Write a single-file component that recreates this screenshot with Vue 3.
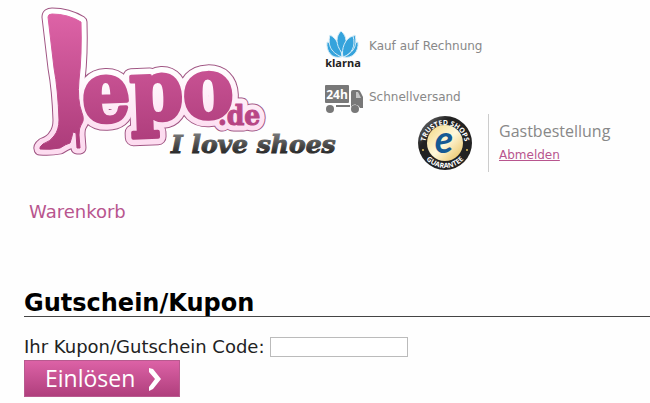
<script setup>
import { ref } from 'vue'

const code = ref('')
const petals = [
  'M341 57 C332 59 326 52 327 42 C332 43 337 48 341 57Z',
  'M344 57 C352 59 359 52 358 42 C353 43 348 48 344 57Z',
  'M342 57 C329 52 328 43 330 35 C336 38 341 46 342 57Z',
  'M343 57 C356 52 357 43 355 35 C349 38 344 46 343 57Z',
  'M342 53 C335 44 336 36 341 31 C347 36 348 44 342 53Z',
  'M343 57 C341 49 345 38 353 36 C356 46 352 54 343 57Z'
]
</script>

<template>
  <div class="page">
    <header class="header">
      <a class="logo" href="#" aria-label="Jepo.de">
        <svg viewBox="30 0 310 165" width="310" height="165">
          <defs>
            <linearGradient id="pink" gradientUnits="userSpaceOnUse" x1="0" y1="10" x2="0" y2="150">
              <stop offset="0" stop-color="#df64a8" />
              <stop offset="1" stop-color="#ac3c7a" />
            </linearGradient>
            <linearGradient id="halo" gradientUnits="userSpaceOnUse" x1="0" y1="70" x2="0" y2="135">
              <stop offset="0" stop-color="#ffffff" />
              <stop offset="1" stop-color="#fddcf0" />
            </linearGradient>
            <linearGradient id="steel" gradientUnits="userSpaceOnUse" x1="0" y1="134" x2="0" y2="154">
              <stop offset="0" stop-color="#777777" />
              <stop offset="1" stop-color="#262626" />
            </linearGradient>
            <path id="boot" d="M48 17 Q48 14 52 14 Q68 14 81 22 Q82 55 79 80 Q77 100 82 113 Q85 120 81 125 Q79 128 79 135 L80 148 L77 148 L76 133 L73 132 Q72 137 70 143 Q66 144 60 148 Q50 150 40 149 Q39 147 43 144 Q51 141 54 136 Q59 130 59 120 Q58 90 54 68Z" />
            <text id="word" class="word" x="83" y="122" transform="rotate(-2 83 122)">epo</text>
            <text id="tld" class="tld" x="218" y="125">.de</text>
          </defs>
          <g fill="#a05583" stroke="#a05583" stroke-linejoin="round">
            <use href="#boot" stroke-width="13" />
            <use href="#word" stroke-width="17" />
            <use href="#tld" stroke-width="13" />
          </g>
          <g fill="url(#halo)" stroke="url(#halo)" stroke-linejoin="round">
            <use href="#boot" stroke-width="11" />
            <use href="#word" stroke-width="15" />
            <use href="#tld" stroke-width="11" />
          </g>
          <g fill="url(#pink)" stroke="url(#pink)" stroke-linejoin="round">
            <use href="#boot" stroke-width="1" />
            <use href="#word" stroke-width="4" />
            <use href="#tld" stroke-width="1" />
          </g>
          <text class="claim" x="171" y="153" fill="url(#steel)" stroke="url(#steel)">I love shoes</text>
        </svg>
      </a>

      <div class="side">
        <div class="perk">
          <svg viewBox="324 28 40 42" width="40" height="42">
            <path v-for="petal in petals" :key="petal" class="petal" :d="petal" />
            <text class="klarna" x="343" y="67" text-anchor="middle">klarna</text>
          </svg>
          <span>Kauf auf Rechnung</span>
        </div>
        <div class="perk">
          <svg viewBox="324 84 40 30" width="40" height="30" fill="#787878">
            <rect x="325" y="85" width="24" height="18" rx="1" />
            <path d="M351 92 q0 -2 2 -2 h5 q2 0 3 3 l2 4 v11 h-3 a5 5 0 0 0 -9 -1z" />
            <path d="M356 92 h2 l3 6 h-5z" fill="#c4c4c4" />
            <rect x="336" y="105" width="14" height="2" />
            <circle cx="330" cy="109" r="4" />
            <circle cx="355" cy="109" r="4" />
            <text class="hours" x="337" y="99" text-anchor="middle">24h</text>
          </svg>
          <span>Schnellversand</span>
        </div>

        <div class="account">
          <svg viewBox="0 0 56 56" width="56" height="56">
            <defs>
              <linearGradient id="gold" x1="0" y1="0" x2="1" y2="1">
                <stop offset="0" stop-color="#f3d77f" />
                <stop offset="0.5" stop-color="#fff8dc" />
                <stop offset="1" stop-color="#e6bd55" />
              </linearGradient>
              <linearGradient id="rim" x1="0" y1="0" x2="1" y2="1">
                <stop offset="0" stop-color="#888888" />
                <stop offset="0.3" stop-color="#222222" />
                <stop offset="1" stop-color="#222222" />
              </linearGradient>
              <path id="arc-top" d="M8 30 a20 20 0 1 1 40 0" />
              <path id="arc-bottom" d="M3 28 a25 25 0 0 0 50 0" />
            </defs>
            <circle cx="28" cy="28" r="27" fill="url(#rim)" />
            <circle cx="28" cy="28" r="18" fill="url(#gold)" />
            <text class="seal"><textPath href="#arc-top" startOffset="50%" text-anchor="middle">TRUSTED SHOPS</textPath></text>
            <text class="seal"><textPath href="#arc-bottom" startOffset="50%" text-anchor="middle">GUARANTEE</textPath></text>
            <circle cx="6" cy="35" r="1" fill="#e3c15d" />
            <circle cx="50" cy="35" r="1" fill="#e3c15d" />
            <text class="seal-e" x="27" y="38" text-anchor="middle">e</text>
          </svg>
          <div class="account-text">
            <span class="account-name">Gastbestellung</span>
            <a class="logout" href="#">Abmelden</a>
          </div>
        </div>
      </div>
    </header>

    <nav class="crumbs"><a href="#">Warenkorb</a></nav>

    <main class="content">
      <h1>Gutschein/Kupon</h1>
      <form @submit.prevent>
        <div class="field">
          <label for="code">Ihr Kupon/Gutschein Code:</label>
          <input id="code" v-model="code" type="text" />
        </div>
        <button type="submit">
          <span>Einlösen</span>
          <svg viewBox="0 0 12 24" width="12" height="24">
            <path d="M0 1 L4 2 L12 12 L4 22 L0 24 L0 20 L6 12 L0 5Z" fill="#ffffff" />
          </svg>
        </button>
      </form>
    </main>
  </div>
</template>

<style>
body { margin: 0; background: #fefefe; }
</style>

<style scoped>
.page {
  font-family: "DejaVu Sans", Verdana, sans-serif;
  color: #222;
}
.header {
  display: flex;
  align-items: flex-start;
  padding-left: 30px;
}
.logo { width: 294px; flex: none; }
svg { display: block; flex: none; overflow: visible; }
.word { font: bold 84px "DejaVu Serif Condensed", "DejaVu Serif", serif; }
.tld { font: bold 28px "DejaVu Serif Condensed", "DejaVu Serif", serif; }
.claim { font: italic bold 25px "DejaVu Serif", serif; stroke-width: 1px; }
.side { padding-top: 28px; }
.perk {
  display: flex;
  gap: 5px;
  font-size: 12px;
  line-height: 16px;
  color: #888;
}
.perk span { padding-top: 10px; }
.perk + .perk { margin-top: 14px; }
.perk + .perk span { padding-top: 5px; }
.petal { fill: #35a3dc; stroke: #d4ecf8; stroke-width: 1px; }
.klarna { font: bold 11px "Open Sans", sans-serif; fill: #222; }
.hours { font: bold 12px "Open Sans", sans-serif; fill: #fff; }
.account {
  display: flex;
  align-items: center;
  margin-left: 93px;
}
.account-text {
  display: flex;
  flex-direction: column;
  gap: 4px;
  height: 58px;
  box-sizing: border-box;
  margin-left: 15px;
  padding: 5px 0 0 10px;
  border-left: 1px solid #ccc;
}
.account-name {
  font: 16px/24px "Open Sans", sans-serif;
  color: #888;
}
.logout { font-size: 12px; line-height: 16px; color: #b8558e; }
.seal { font: bold 7px "Open Sans", sans-serif; fill: #fff; }
.seal-e { font: italic bold 38px Lato, sans-serif; fill: #155a94; }
.crumbs {
  padding: 29px 0 0 29px;
  font-size: 18px;
  line-height: 22px;
}
.crumbs a { color: #b8558e; text-decoration: none; }
.content { padding: 68px 0 0 24px; }
h1 {
  margin: 0;
  font-size: 24px;
  line-height: 25px;
  color: #000;
  border-bottom: 1px solid #444;
}
.field {
  display: flex;
  align-items: center;
  gap: 5px;
  padding-top: 19px;
  font-size: 18px;
  line-height: 21px;
}
input {
  width: 138px;
  height: 20px;
  box-sizing: border-box;
  border: 1px solid #bbb;
  background: #fff;
}
button {
  display: flex;
  align-items: center;
  gap: 14px;
  margin-top: 3px;
  height: 37px;
  padding: 0 18px 0 20px;
  border: 1px solid #b85a8f;
  background: linear-gradient(#dc62a6, #b03f7d);
  color: #fff;
  font: 23px/34px "Open Sans", sans-serif;
}
button span { padding-bottom: 2px; }
</style>
